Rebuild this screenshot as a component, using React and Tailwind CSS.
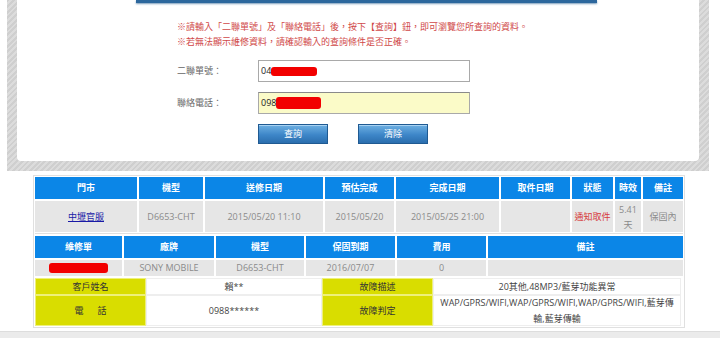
import React from 'react';

const cjk = { fontFamily: '"Open Sans", "Noto Sans CJK TC", sans-serif' };

const Redact = ({ className }) => (
  <span className={`inline-block bg-[#f20000] rounded-[3px] ${className}`} />
);

const QueryPanel = () => (
  <div className="mx-[7px] w-[702px] px-[10px] pb-[10px] bg-[repeating-linear-gradient(135deg,#cfcfcf_0px,#cfcfcf_2px,#dcdcdc_2px,#dcdcdc_4px)]">
    <div className="h-[161px] bg-white rounded-b-[4px] flex flex-col">
      <div className="ml-[119px] w-[461px] h-[3px] bg-[#2c679d] shadow-[0_1px_2px_#7a9cbb]" />

      <div className="ml-[160px] mt-[16px] text-[9px] leading-[15px] text-[#d04848]">
        <p>※請輸入「二聯單號」及「聯絡電話」後，按下【查詢】鈕，即可瀏覽您所查詢的資料。</p>
        <p>※若無法顯示維修資料，請確認輸入的查詢條件是否正確。</p>
      </div>

      <div className="ml-[160px] mt-[11px] flex flex-col gap-[10px] text-[9px] text-[#666]">
        <div className="flex items-center">
          <span className="w-[81px]">二聯單號：</span>
          <div className="w-[212px] h-[22px] border border-[#a9a9a9] bg-white flex items-center pl-[2px] text-[9px] text-[#222]">
            04<Redact className="w-[46px] h-[9px]" />
          </div>
        </div>
        <div className="flex items-center">
          <span className="w-[81px]">聯絡電話：</span>
          <div className="w-[212px] h-[22px] border border-[#a9a9a9] border-t-[#8a8a8a] bg-[#fbfbc8] flex items-center pl-[2px] text-[9px] text-[#222]">
            098<Redact className="w-[45px] h-[12px]" />
          </div>
        </div>
      </div>

      <div className="ml-[241px] mt-[10px] flex gap-[30px]">
        {['查詢', '清除'].map((t) => (
          <button key={t} className="w-[70px] h-[20px] border border-[#1f5a92] bg-[linear-gradient(#6eb0e2,#3d86c8_55%,#2b6eae)] text-white text-[9px] shadow-[inset_0_1px_0_#a8d2f2]">
            {t}
          </button>
        ))}
      </div>
    </div>
  </div>
);

const Head = ({ children }) => (
  <div className="h-[22px] bg-[#0b86e7] text-white text-[9px] font-bold flex items-center justify-center">
    {children}
  </div>
);

const Cell = ({ children, className = '' }) => (
  <div className={`bg-[#e6e6e6] text-[9px] text-[#8a8a8a] flex items-center justify-center text-center ${className}`}>
    {children}
  </div>
);

const Yellow = ({ children, className = '' }) => (
  <div className={`bg-[#d9dd00] border border-[#eef07a] text-[9px] text-[#333] flex items-center justify-center ${className}`}>
    {children}
  </div>
);

const Value = ({ children, className = '' }) => (
  <div className={`bg-white border border-[#eeeeee] text-[9px] text-[#444] flex flex-col items-center justify-center text-center ${className}`}>
    {children}
  </div>
);

const RepairTables = () => (
  <div className="ml-[33px] mt-[4px] w-[652px] border border-[#e0e0e0] p-[1px] flex flex-col">
    <div className="grid grid-cols-[102px_64px_118px_69px_103px_69px_41px_26px_40px] gap-[2px]">
      <Head>門市</Head>
      <Head>機型</Head>
      <Head>送修日期</Head>
      <Head>預估完成</Head>
      <Head>完成日期</Head>
      <Head>取件日期</Head>
      <Head>狀態</Head>
      <Head>時效</Head>
      <Head>備註</Head>
      <Cell className="h-[31px]"><span className="text-[#1a1aa6] underline">中壢官服</span></Cell>
      <Cell className="h-[31px]">D6653-CHT</Cell>
      <Cell className="h-[31px]">2015/05/20 11:10</Cell>
      <Cell className="h-[31px]">2015/05/20</Cell>
      <Cell className="h-[31px]">2015/05/25 21:00</Cell>
      <Cell className="h-[31px]"></Cell>
      <Cell className="h-[31px]"><span className="text-[#d63a3a]">通知取件</span></Cell>
      <Cell className="h-[31px] flex-col leading-[15px]"><span>5.41</span><span>天</span></Cell>
      <Cell className="h-[31px]">保固內</Cell>
    </div>

    <div className="mt-[1px] h-px bg-[#e0e0e0]" />

    <div className="mt-[2px] grid grid-cols-[87px_90px_88px_89px_89px_195px] gap-[2px]">
      <Head>維修單</Head>
      <Head>廠牌</Head>
      <Head>機型</Head>
      <Head>保固到期</Head>
      <Head>費用</Head>
      <Head>備註</Head>
      <Cell className="h-[16px]"><Redact className="w-[59px] h-[10px]" /></Cell>
      <Cell className="h-[16px]">SONY MOBILE</Cell>
      <Cell className="h-[16px]">D6653-CHT</Cell>
      <Cell className="h-[16px]">2016/07/07</Cell>
      <Cell className="h-[16px]">0</Cell>
      <Cell className="h-[16px]"></Cell>
    </div>

    <div className="mt-[2px] grid grid-cols-[111px_176px_111px_248px] grid-rows-[17px_31px]">
      <Yellow>客戶姓名</Yellow>
      <Value>賴**</Value>
      <Yellow>故障描述</Yellow>
      <Value>20其他,48MP3/藍芽功能異常</Value>
      <Yellow><span className="tracking-[14px] pl-[14px]">電話</span></Yellow>
      <Value>0988******</Value>
      <Yellow>故障判定</Yellow>
      <Value className="leading-[16px] whitespace-nowrap">
        <span>WAP/GPRS/WIFI,WAP/GPRS/WIFI,WAP/GPRS/WIFI,藍芽傳</span>
        <span>輸,藍芽傳輸</span>
      </Value>
    </div>
  </div>
);

export default function App() {
  return (
    <div className="w-[720px] h-[338px] bg-white overflow-hidden flex flex-col" style={cjk}>
      <QueryPanel />
      <RepairTables />
      <div className="mt-auto h-[7px] bg-[#ebebeb] border-t border-[#dddddd]" />
    </div>
  );
}
